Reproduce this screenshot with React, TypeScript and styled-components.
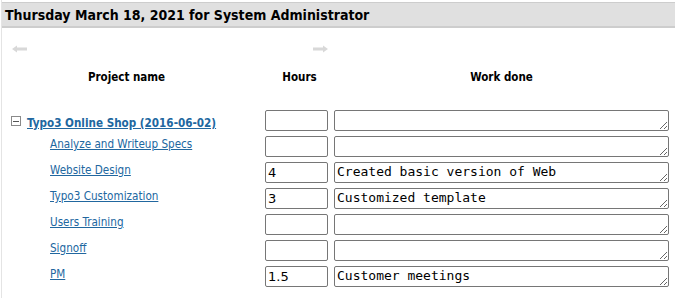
import styled, { createGlobalStyle } from "styled-components";

const GlobalStyle = createGlobalStyle`
    body {
        margin: 0;
        background: #ffffff;
        font-family: "DejaVu Sans Condensed", "DejaVu Sans", Verdana, sans-serif;
        color: #000;
    }
`;

const Page = styled.div`
    padding-top: 2px;
    border-left: 1px solid #e4e4e4;
    margin-left: 1px;
    min-height: 296px;
`;

const TitleBar = styled.div`
    background-color: #e0e0e0;
    border-top: 1px solid #cdcdcd;
    border-bottom: 2px solid #cdcdcd;
    height: 23px;
    display: flex;
    align-items: center;
    padding-left: 3px;
    font-size: 14px;
    font-weight: bold;
`;

const Grid = styled.div`
    display: grid;
    grid-template-columns: 263px 69px 335px;
    align-items: start;
`;

const ArrowRow = styled(Grid)`
    margin-top: 17px;
    height: 12px;
`;

const Arrow = styled.svg<{ $right?: boolean }>`
    display: block;
    margin-left: ${(p) => (p.$right ? "48px" : "9px")};
`;

const HeaderRow = styled(Grid)`
    margin-top: 13px;
    margin-bottom: 26px;
`;

const HeadCell = styled.div<{ $shift?: number }>`
    font-size: 11.5px;
    font-weight: bold;
    text-align: center;
    padding-right: ${(p) => p.$shift ?? 0}px;
`;

const Row = styled(Grid)`
    height: 26px;
`;

const NameCell = styled.div<{ $sub?: boolean }>`
    display: flex;
    align-items: center;
    padding-left: ${(p) => (p.$sub ? "48px" : "9px")};
    padding-top: ${(p) => (p.$sub ? "1px" : "6px")};
    font-size: 11.6px;
`;

const Toggle = styled.span`
    display: inline-flex;
    align-items: center;
    justify-content: center;
    width: 8px;
    height: 8px;
    border: 1px solid #8a8a8a;
    margin-right: 6px;
    margin-top: -4px;
    &::after {
        content: "";
        width: 6px;
        height: 1px;
        background: #555;
    }
`;

const Link = styled.a<{ $bold?: boolean }>`
    color: #21679f;
    text-decoration: underline;
    font-weight: ${(p) => (p.$bold ? "bold" : "normal")};
    cursor: pointer;
`;

const HoursInput = styled.input`
    box-sizing: border-box;
    width: 63px;
    height: 21px;
    margin: 0;
    padding: 1px 2px;
    border: 1px solid #767676;
    border-radius: 2px;
    font-family: "DejaVu Sans", sans-serif;
    font-size: 13px;
    color: #000;
    background: #fff;
`;

const WorkArea = styled.textarea`
    box-sizing: border-box;
    display: block;
    width: 335px;
    height: 21px;
    margin: 0;
    padding: 1px 2px;
    border: 1px solid #767676;
    border-radius: 2px;
    font-family: "DejaVu Sans Mono", monospace;
    font-size: 13px;
    line-height: 16px;
    color: #000;
    background: #fff;
    overflow: hidden;
    resize: vertical;
`;

type Task = { name: string; hours: string; work: string };

const tasks: Task[] = [
    { name: "Analyze and Writeup Specs", hours: "", work: "" },
    { name: "Website Design", hours: "4", work: "Created basic version of Web" },
    { name: "Typo3 Customization", hours: "3", work: "Customized template" },
    { name: "Users Training", hours: "", work: "" },
    { name: "Signoff", hours: "", work: "" },
    { name: "PM", hours: "1.5", work: "Customer meetings" },
];

const ArrowIcon = ({ right }: { right?: boolean }) => (
    <Arrow $right={right} width="16" height="8" viewBox="0 0 16 8">
        <g transform={right ? "" : "translate(16 0) scale(-1 1)"}>
            <path d="M0 2.5h10V0.5l5 3.5-5 3.5V5.5H0z" fill="#d8d8d8" />
        </g>
    </Arrow>
);

export default function App() {
    return (
        <>
            <GlobalStyle />
            <Page>
                <TitleBar>Thursday March 18, 2021 for System Administrator</TitleBar>
                <ArrowRow>
                    <ArrowIcon />
                    <ArrowIcon right />
                </ArrowRow>
                <HeaderRow>
                    <HeadCell $shift={14}>Project name</HeadCell>
                    <HeadCell>Hours</HeadCell>
                    <HeadCell>Work done</HeadCell>
                </HeaderRow>
                <Row>
                    <NameCell>
                        <Toggle />
                        <Link $bold>Typo3 Online Shop (2016-06-02)</Link>
                    </NameCell>
                    <HoursInput defaultValue="" />
                    <WorkArea defaultValue="" />
                </Row>
                {tasks.map((t) => (
                    <Row key={t.name}>
                        <NameCell $sub>
                            <Link>{t.name}</Link>
                        </NameCell>
                        <HoursInput defaultValue={t.hours} />
                        <WorkArea defaultValue={t.work} />
                    </Row>
                ))}
            </Page>
        </>
    );
}
